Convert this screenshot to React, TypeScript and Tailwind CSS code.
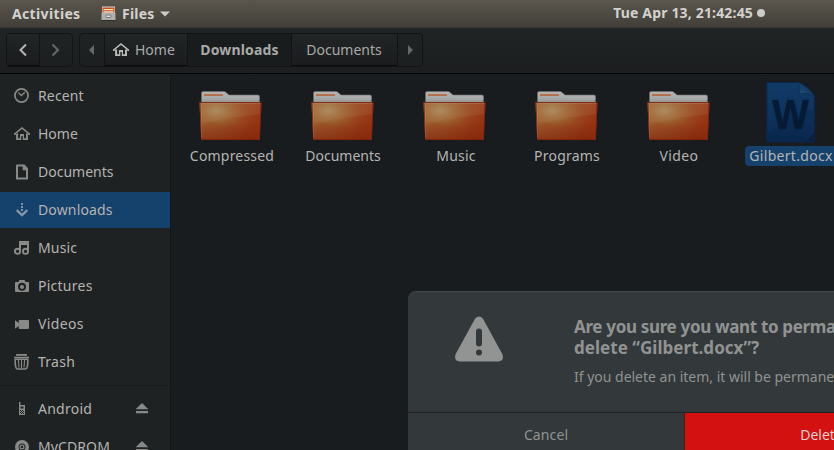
import type { ReactNode } from "react";

function Icon({ children, className = "text-[#898a88]" }: { children: ReactNode; className?: string }) {
  return (
    <svg width="16" height="16" viewBox="0 0 16 16" fill="currentColor" className={`shrink-0 ${className}`}>
      {children}
    </svg>
  );
}

const house = (
  <>
    <path d="M8 .9 16 7.4v1.7h-1.7V7.9L8 3.1 1.7 7.9v1.2H0V7.4Z" />
    <path d="M2.1 7.4h2v4.8H6V8h4v4.2h2V7.4h2v6.7H8.8v-4H7.3v4H2.1Z" />
  </>
);

const icons: Record<string, ReactNode> = {
  Recent: (
    <>
      <circle cx="7.5" cy="7.5" r="6.6" fill="none" stroke="currentColor" strokeWidth="1.7" />
      <path d="m4.3 4.6 3 2.9 3.6-3.2" fill="none" stroke="currentColor" strokeWidth="1.3" />
    </>
  ),
  Home: house,
  Documents: <path fillRule="evenodd" d="M3 .5h7.5L14 4.3V15.5H2V1.5Q2 .5 3 .5ZM4 2.5v11h8V6.3H8.7V2.5Z" />,
  Downloads: (
    <>
      <path d="M7 1h2v2H7zM7 4h2v2H7zM7 7h2v2H7z" />
      <path d="m2.7 8.2 5.3 5 5.3-5" fill="none" stroke="currentColor" strokeWidth="2.4" />
    </>
  ),
  Music: (
    <>
      <path d="M5 1h10v11h-2V5H7v7H5Z" />
      <circle cx="3.500" cy="11.300" r="2.600" fill="none" stroke="currentColor" strokeWidth="1.900" />
      <circle cx="11.500" cy="11.300" r="2.600" fill="none" stroke="currentColor" strokeWidth="1.900" />
    </>
  ),
  Pictures: (
    <path
      fillRule="evenodd"
      d="M5.500 2h5L11.500 4H14q1 0 1 1v8q0 1-1 1H2q-1 0-1-1V5q0-1 1-1h2.500ZM8 4.800a4 4 0 1 0 0 8 4 4 0 0 0 0-8ZM8 6.900a2 2 0 1 1 0 4 2 2 0 0 1 0-4Z"
    />
  ),
  Videos: <path d="M1 4.200 4.700 7V5q0-1 1-1H14q1 0 1 1v7q0 1-1 1H5.700q-1 0-1-1v-2L1 12.800Z" />,
  Trash: (
    <g fill="none" stroke="currentColor">
      <path d="M0 3.500h15M3 2V.700h9V2M3 1h9" strokeWidth="1.500" />
      <path d="M1.200 5.300h12.600q.3 9.700-2.300 9.700h-8Q.9 15 1.200 5.300Z" strokeWidth="1.600" />
      <path d="M4.400 6 5 13.500M7.500 6v8M10.600 6 10 13.500" strokeWidth="1.100" />
    </g>
  ),
  Android: (
    <path
      fillRule="evenodd"
      d="M5 1h1.500v3H11v10H5ZM6.500 5.500v2h3v-2ZM6 9v1h1V9Zm2 0v1h1V9Zm-1 1v1h1v-1Zm2 0v1h1v-1Zm-3 1v1h1v-1Zm2 0v1h1v-1Zm-1 1v1h1v-1Zm2 0v1h1v-1Z"
    />
  ),
  MyCDROM: (
    <>
      <path fillRule="evenodd" d="M8 1a7 7 0 1 1 0 14A7 7 0 0 1 8 1Zm0 3.500a3.500 3.500 0 1 0 0 7 3.500 3.500 0 0 0 0-7Z" />
      <circle cx="8" cy="8" r="1.900" fill="none" stroke="currentColor" strokeWidth="1.200" />
    </>
  ),
};

const places: { name: string; tracking: string }[] = [
  { name: "Recent", tracking: "tracking-[0.15px]" },
  { name: "Home", tracking: "tracking-[0px]" },
  { name: "Documents", tracking: "tracking-[0px]" },
  { name: "Downloads", tracking: "tracking-[0.15px]" },
  { name: "Music", tracking: "tracking-[0.15px]" },
  { name: "Pictures", tracking: "tracking-[0.25px]" },
  { name: "Videos", tracking: "tracking-[0.35px]" },
  { name: "Trash", tracking: "tracking-[0.25px]" },
];

function Place({ name, tracking, active = false, eject = false }: { name: string; tracking: string; active?: boolean; eject?: boolean }) {
  return (
    <div className={`flex h-9 shrink-0 items-center pl-3.5 pr-5 text-[#b4b4b1] ${active ? "bg-[#15416d]" : ""}`}>
      <Icon className={active ? "text-[#8395a7]" : "text-[#898a88]"}>{icons[name]}</Icon>
      <span className={`ml-2 flex-1 whitespace-nowrap ${tracking}`}>{name}</span>
      {eject && (
        <Icon>
          <path d="m8 2 6.300 6.300H1.700ZM2 10h12v2.200H2Z" />
        </Icon>
      )}
    </div>
  );
}

function Folder() {
  return (
    <svg width="64" height="52" viewBox="0 0 64 52" className="shrink-0">
      <defs>
        <linearGradient id="paper" x1="0" y1="0" x2="0" y2="1">
          <stop offset="0" stopColor="#b4b4b4" />
          <stop offset=".4" stopColor="#a8a8a8" />
          <stop offset=".62" stopColor="#8c8c8c" />
        </linearGradient>
        <linearGradient id="front" x1="0" y1="0" x2="1" y2=".3">
          <stop offset="0" stopColor="#a4633b" />
          <stop offset=".5" stopColor="#9b5128" />
          <stop offset="1" stopColor="#963414" />
        </linearGradient>
        <radialGradient id="glow" cx=".27" cy=".22" r=".65">
          <stop offset="0" stopColor="#ad9463" stopOpacity=".95" />
          <stop offset=".5" stopColor="#9c6530" stopOpacity=".65" />
          <stop offset="1" stopColor="#983a12" stopOpacity="0" />
        </radialGradient>
        <linearGradient id="shade" x1="0" y1="0" x2="0" y2="1">
          <stop offset=".5" stopColor="#7d2208" stopOpacity="0" />
          <stop offset="1" stopColor="#7d2208" stopOpacity=".6" />
        </linearGradient>
      </defs>
      <path d="M2.500 3q0-1.500 1.500-1.500H25q1 0 1.700.8L30 5H59q1.500 0 1.500 1.500V20h-58Z" fill="url(#paper)" stroke="#6e6e6e" strokeWidth=".6" />
      <rect x="5" y="4" width="19" height="2" rx=".5" fill="#b4724a" />
      <path d="M.5 12.300h62L60.800 50H2.300Z" fill="url(#front)" />
      <path d="M.5 12.300h62L60.800 50H2.300Z" fill="url(#glow)" />
      <path d="M.5 12.300h62L60.800 50H2.300Z" fill="url(#shade)" />
      <path d="M1.500 13h60.500l-.5 11Q38 27 2 33Z" fill="#b98260" opacity=".2" />
      <path d="M.8 12.500h61.300L60.400 49.600H2.700Z" fill="none" stroke="#7b210b" strokeWidth=".8" />
      <path d="M2.500 48V13.500h58.500" fill="none" stroke="#b98a68" strokeWidth=".8" opacity=".5" />
    </svg>
  );
}

function DocxFile() {
  return (
    <svg width="50" height="62" viewBox="0 0 50 62" className="shrink-0">
      <defs>
        <linearGradient id="page" x1="0" y1="0" x2="0" y2="1">
          <stop offset="0" stopColor="#123a66" />
          <stop offset=".6" stopColor="#0d325e" />
          <stop offset="1" stopColor="#0b284d" />
        </linearGradient>
        <linearGradient id="curl" x1="0" y1="1" x2="1" y2="0">
          <stop offset="0" stopColor="#24527a" />
          <stop offset=".6" stopColor="#143a60" />
        </linearGradient>
      </defs>
      <path d="M.8 1.500h32.200q9.500 4 15.300 13.500v46H.8Z" fill="url(#page)" stroke="#09264b" />
      <path d="M33 1.500q2 6 .2 11 8-1.500 15 2.500Q42 6 33 1.500Z" fill="url(#curl)" stroke="#0b2c50" strokeWidth=".6" />
      <path d="M2 53Q14 43 23 35 34 30 47 29V44Q43 53 37 60H2Z" fill="#061f45" opacity=".22" />
      <text x="24.500" y="47.500" textAnchor="middle" textLength="36.500" lengthAdjust="spacingAndGlyphs" fontSize="43" fontWeight="700" fill="#061a33" stroke="#061a33" strokeWidth=".6" className="font-['Liberation_Sans',sans-serif]">
        W
      </text>
      <path d="M40 60 48 52v8Z" fill="#071e3d" opacity=".7" />
    </svg>
  );
}

const folders = [
  { name: "Compressed", style: "tracking-[0.2px] translate-x-px" },
  { name: "Documents", style: "tracking-[0px]" },
  { name: "Music", style: "tracking-[0.2px] translate-x-px" },
  { name: "Programs", style: "tracking-[0.2px]" },
  { name: "Video", style: "tracking-[0.4px]" },
];

function TopBar() {
  return (
    <header className="flex h-7 shrink-0 items-center border-b border-[#35342f] bg-linear-to-b from-[#5a564d] to-[#413f38] pl-3 font-bold text-[#d3d2cf]">
      <span className="w-[89px] shrink-0 tracking-[0.35px]">Activities</span>
      <svg width="15" height="16" viewBox="0 0 15 16" className="shrink-0">
        <path d="M1 .5h13V14H1Z" fill="#d9d6d2" />
        <path d="M1.500 1.500h12v5h-12Z" fill="#c4531a" />
        <path d="M2.500 3h10v1.200h-10Zm0 2.200h10v1.300h-10Z" fill="#f0dcc8" />
        <path d="M.5 7h14v7H.5Z" fill="#b0afad" />
        <path d="M.5 14h14v1H.5Z" fill="#2b2a28" />
        <rect x="5" y="9" width="5" height="2.500" rx="1" fill="#e2e2e2" stroke="#777" />
      </svg>
      <span className="ml-1.5 tracking-[0.2px]">Files</span>
      <svg width="10" height="6" viewBox="0 0 10 6" className="ml-1.5 shrink-0 fill-[#cccbc7]">
        <path d="M0 .5h10L5 5.500Z" />
      </svg>
      <span className="ml-auto -translate-y-px whitespace-nowrap tracking-[0.17px]">Tue Apr 13, 21:42:45</span>
      <span className="ml-[4px] mr-[69px] size-2 shrink-0 -translate-y-px rounded-full bg-[#cccbc8]" />
    </header>
  );
}

const raised = "bg-linear-to-b from-[#222526] to-[#1a1c1d] shadow-[inset_0_-1px_#090a0b]";

function Toolbar() {
  return (
    <nav className="flex h-[46px] shrink-0 items-start border-b border-black bg-linear-to-b from-[#202425] to-[#1c1e1f] px-1.5 pt-[5px] text-[#a9aaa7]">
      <div className="flex h-[34px] w-[67px] overflow-hidden rounded border border-[#111314]">
        <div className={`flex w-[33px] items-center justify-center border-r border-[#111314] ${raised}`}>
          <svg width="16" height="16" viewBox="0 0 16 16" fill="none" stroke="#b6b7b4" strokeWidth="2">
            <path d="M11 2.500 5.500 8l5.500 5.500" />
          </svg>
        </div>
        <div className="flex flex-1 items-center justify-center">
          <svg width="16" height="16" viewBox="0 0 16 16" fill="none" stroke="#666968" strokeWidth="2">
            <path d="M4.500 2.500 10 8l-5.500 5.500" />
          </svg>
        </div>
      </div>
      <div className="ml-1.5 flex h-[34px] w-[344px] overflow-hidden rounded border border-[#111314]">
        <div className="flex w-[25px] items-center justify-center border-r border-[#111314]">
          <svg width="5" height="10" viewBox="0 0 5 10" fill="#666968" className="-translate-x-px"><path d="M5 0v10L0 5Z" /></svg>
        </div>
        <div className={`flex w-[83px] items-center border-r border-[#111314] pl-2 ${raised}`}>
          <Icon className="text-[#b8b9b6]">{house}</Icon>
          <span className="ml-1.5 tracking-[0px]">Home</span>
        </div>
        <div className="flex w-[104px] items-center justify-center border-r border-[#111314] bg-[#191c1d] font-bold tracking-[0.15px]">Downloads</div>
        <div className={`flex w-[106px] items-center justify-center border-r border-[#111314] pr-px ${raised}`}>Documents</div>
        <div className="flex flex-1 items-center justify-center">
          <svg width="5" height="10" viewBox="0 0 5 10" fill="#666968"><path d="M0 0v10l5-5Z" /></svg>
        </div>
      </div>
    </nav>
  );
}

function ConfirmDialog() {
  return (
    <section className="absolute left-[408px] top-[291px] flex h-[166px] w-[554px] flex-col overflow-hidden rounded-t-lg border-t border-[#45494b] bg-[#33383a] text-[#919392]">
      <div className="flex h-[120px] shrink-0 pl-[46px] pt-6">
        <svg width="50" height="46" viewBox="0 0 50 46" className="shrink-0">
          <path d="M21 2.800Q25 -2 29 2.800L48.300 38Q50.500 45 44.500 45.500H5.500Q-.5 45 1.700 38Z" fill="#919493" />
          <rect x="22" y="12.500" width="6" height="18" rx="3" fill="#33383a" />
          <circle cx="25" cy="36.500" r="3" fill="#33383a" />
        </svg>
        <div className="ml-[70px] whitespace-nowrap">
          <h1 className="text-[17px] font-bold leading-[21px]">
            <span className="tracking-[-0.33px]">Are you sure you want to permanently</span>
            <br />
            <span className="tracking-[0.04px]">delete “Gilbert.docx”?</span>
          </h1>
          <p className="mt-[9px] leading-5 tracking-[-0.01px]">If you delete an item, it will be permanently lost.</p>
        </div>
      </div>
      <div className="flex flex-1 border-t border-[#1f2223]">
        <div className="flex w-[277px] items-center justify-center border-r border-[#571719] tracking-[0.1px]">Cancel</div>
        <div className="flex flex-1 items-center justify-center bg-[#d41111] pr-1 text-[#e6cfcf]">Delete</div>
      </div>
    </section>
  );
}

export default function App() {
  return (
    <div className="relative flex h-[450px] w-[834px] flex-col overflow-hidden bg-[#191c1e] font-['Noto_Sans',sans-serif] text-[14px] leading-5">
      <TopBar />
      <Toolbar />
      <div className="flex min-h-0 flex-1">
        <aside className="flex w-[171px] shrink-0 flex-col gap-0.5 overflow-hidden border-r border-[#131617] bg-[#1f2223] pt-1">
          {places.map((p) => (
            <Place key={p.name} {...p} active={p.name === "Downloads"} />
          ))}
          <div className="mb-[3px] mt-[3px] h-px shrink-0 bg-[#191b1c]" />
          <Place name="Android" tracking="tracking-[0.25px]" eject />
          <Place name="MyCDROM" tracking="tracking-[0.1px]" eject />
        </aside>
        <main className="flex flex-1 overflow-hidden pl-1 text-[#b4b5b3]">
          {folders.map((f) => (
            <div key={f.name} className="flex w-28 shrink-0 flex-col items-center pt-4">
              <Folder />
              <span className={`mt-1 ${f.style}`}>{f.name}</span>
            </div>
          ))}
          <div className="flex w-28 shrink-0 flex-col items-center pt-[7px]">
            <DocxFile />
            <span className="mt-[3px] rounded bg-[#15416d] px-1 tracking-[0.3px]">Gilbert.docx</span>
          </div>
        </main>
      </div>
      <ConfirmDialog />
    </div>
  );
}
